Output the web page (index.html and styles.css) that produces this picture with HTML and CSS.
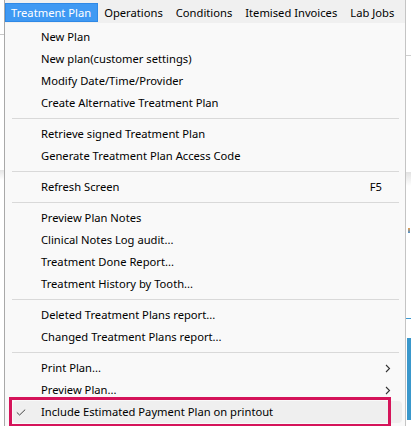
FILE: index.html
```html
<!DOCTYPE html>
<html lang="en">
<head>
    <meta charset="UTF-8">
    <title>Treatment Plan menu</title>
    <link rel="stylesheet" href="styles.css">
</head>
<body>
    <div class="screen">
        <!-- strip of the main window showing on the left -->
        <div class="side side-left"></div>

        <div class="window">
            <!-- Menu bar -->
            <nav class="menubar">
                <span class="menubar-item active">Treatment Plan</span>
                <span class="menubar-item">Operations</span>
                <span class="menubar-item">Conditions</span>
                <span class="menubar-item">Itemised Invoices</span>
                <span class="menubar-item">Lab Jobs</span>
            </nav>

            <!-- Treatment Plan dropdown -->
            <ul class="dropdown">
                <li class="menu-item"><span class="label">New Plan</span></li>
                <li class="menu-item"><span class="label">New plan(customer settings)</span></li>
                <li class="menu-item"><span class="label">Modify Date/Time/Provider</span></li>
                <li class="menu-item"><span class="label">Create Alternative Treatment Plan</span></li>
                <li class="separator"></li>
                <li class="menu-item"><span class="label">Retrieve signed Treatment Plan</span></li>
                <li class="menu-item"><span class="label">Generate Treatment Plan Access Code</span></li>
                <li class="separator"></li>
                <li class="menu-item"><span class="label">Refresh Screen</span><span class="shortcut">F5</span></li>
                <li class="separator"></li>
                <li class="menu-item"><span class="label">Preview Plan Notes</span></li>
                <li class="menu-item"><span class="label">Clinical Notes Log audit...</span></li>
                <li class="menu-item"><span class="label">Treatment Done Report...</span></li>
                <li class="menu-item"><span class="label">Treatment History by Tooth...</span></li>
                <li class="separator"></li>
                <li class="menu-item"><span class="label">Deleted Treatment Plans report...</span></li>
                <li class="menu-item"><span class="label">Changed Treatment Plans report...</span></li>
                <li class="separator"></li>
                <li class="menu-item">
                    <span class="label">Print Plan...</span>
                    <svg class="submenu-arrow" width="6" height="9" viewBox="0 0 6 9"><path d="M1 1 L4.5 4.5 L1 8" fill="none" stroke="#333" stroke-width="1.1"/></svg>
                </li>
                <li class="menu-item">
                    <span class="label">Preview Plan...</span>
                    <svg class="submenu-arrow" width="6" height="9" viewBox="0 0 6 9"><path d="M1 1 L4.5 4.5 L1 8" fill="none" stroke="#333" stroke-width="1.1"/></svg>
                </li>
                <li class="menu-item hovered">
                    <svg class="check" width="10" height="7" viewBox="0 0 10 7"><path d="M0.8 3.4 L3.6 6 L9.2 0.6" fill="none" stroke="#444" stroke-width="1"/></svg>
                    <span class="label">Include Estimated Payment Plan on printout</span>
                    <!-- highlight box drawn on top of the row -->
                    <span class="callout"></span>
                </li>
            </ul>
        </div>

        <!-- strip of the main window showing on the right -->
        <div class="side side-right">
            <span class="glyph"></span>
        </div>
    </div>
</body>
</html>
```

FILE: styles.css
```css
body {
    margin: 0;
    padding: 0;
    background-color: #fff;
    font-family: "Noto Sans", "Open Sans", sans-serif;
    font-size: 11.2px;
    color: #000;
}
.screen {
    width: 411px;
    height: 426px;
    overflow: hidden;
    display: flex;
    background-color: #fff;
}
.side {
    flex: none;
    height: 426px;
}
.side-left {
    width: 4px;
    background:
        linear-gradient(#c8c8c8, #c8c8c8) 0 34px / 100% 1px no-repeat,
        linear-gradient(#e4e4e4, #fff) 0 170px / 100% 10px no-repeat,
        #fff;
}
.side-right {
    width: 5px;
    background:
        linear-gradient(#d0d0d0, #d0d0d0) 0 55px / 100% 1px no-repeat,
        linear-gradient(#e2e2e2, #fff) 0 172px / 100% 14px no-repeat,
        linear-gradient(#3d9ad2, #3d9ad2) 0 318px / 100% 1px no-repeat,
        linear-gradient(#3a98cc, #3a98cc) 1px 338px / 100% 82px no-repeat,
        #fff;
}
.side-right .glyph {
    display: block;
    margin: 228px 0 0 2px;
    width: 2px;
    height: 5px;
    background: linear-gradient(#e8a050, #4a90d0);
}
.window {
    flex: none;
    width: 400px;
    height: 426px;
    border-left: 1px solid #a9a9a9;
    border-right: 1px solid #c4c4c4;
    background-color: #f9f9f9;
}
.menubar {
    display: flex;
    height: 23px;
    padding-top: 3px;
    box-sizing: border-box;
    background-color: #f0f0f0;
}
.menubar-item {
    flex: none;
    white-space: nowrap;
    height: 19px;
    line-height: 17px;
    padding: 0 6px 0 5px;
    box-sizing: border-box;
    border: 1px solid transparent;
}
.menubar-item.active {
    background-color: #3f99f3;
    border-color: #2f89e6;
    color: #fff;
}
.dropdown {
    list-style: none;
    margin: 0;
    padding: 3px 0 0 0;
}
.menu-item {
    position: relative;
    display: flex;
    align-items: center;
    height: 22px;
    padding-left: 36px;
    padding-right: 13px;
    white-space: nowrap;
    line-height: 20px;
}
.menu-item .label {
    flex: 1;
}
.shortcut {
    margin-right: 10px;
}
.submenu-arrow {
    margin-right: 1px;
}
.separator {
    height: 1px;
    margin: 4px 6px 4px 7px;
    background-color: #d9d9d9;
}
.menu-item.hovered {
    margin: 0 3px 0 8px;
    padding-left: 28px;
    border-radius: 4px;
    background-color: #efefef;
}
.check {
    position: absolute;
    left: 3px;
    top: 8px;
}
.callout {
    position: absolute;
    left: -4px;
    right: 11px;
    top: -4px;
    bottom: -4px;
    border: 3px solid #d5145a;
}
```
